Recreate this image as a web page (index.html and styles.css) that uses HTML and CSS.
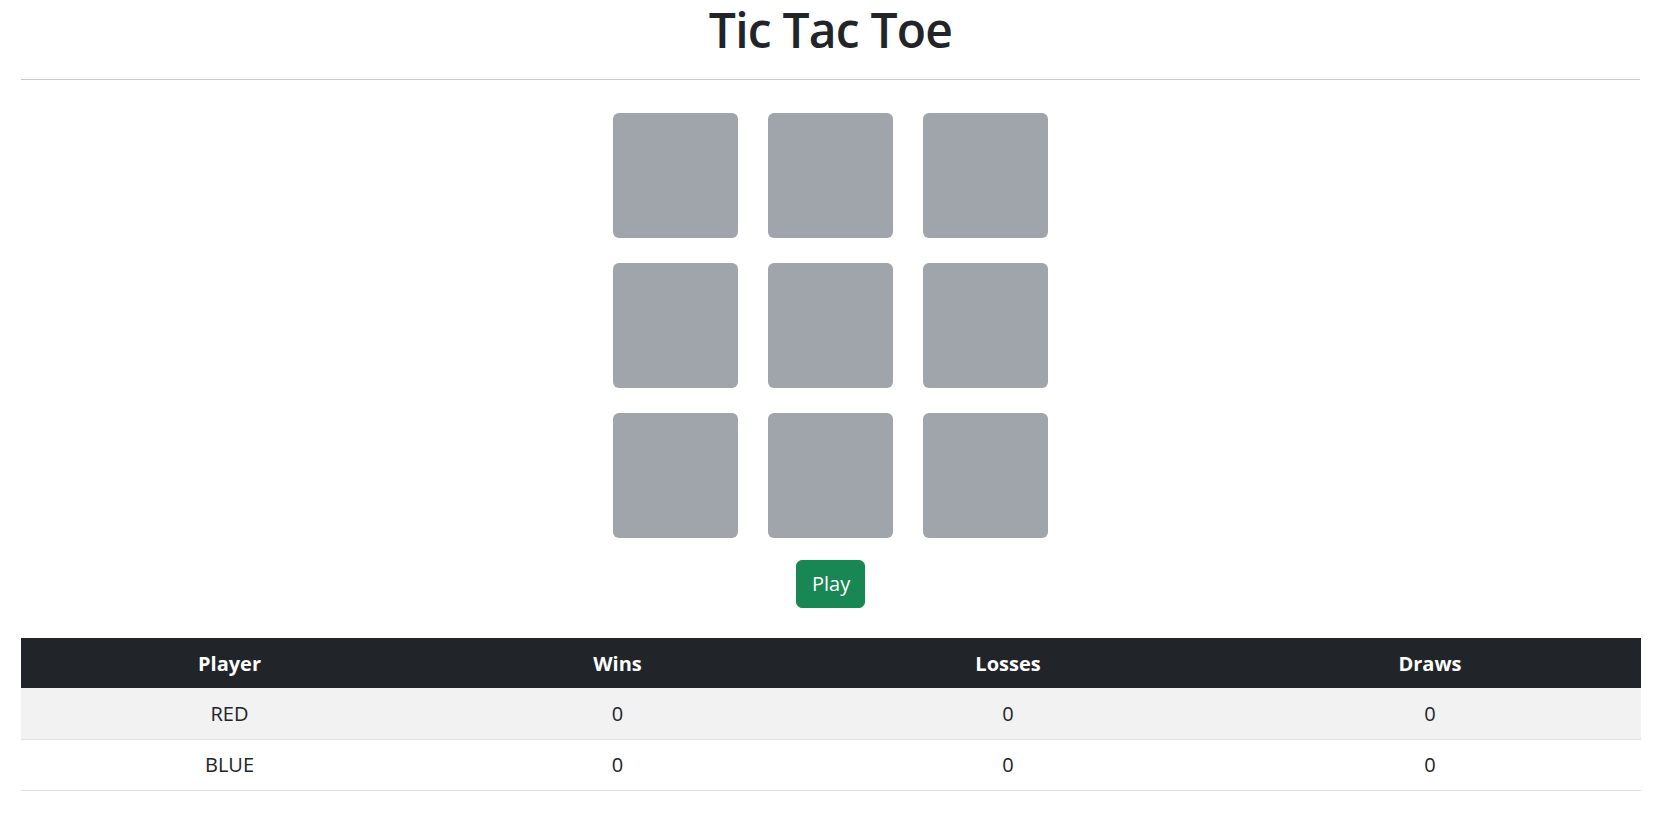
FILE: index.html
```html
<!DOCTYPE html>
<html lang="en">
<head>
<meta charset="utf-8">
<title>Tic Tac Toe</title>
<link rel="stylesheet" href="styles.css">
</head>
<body>
  <main class="page">
    <h1 class="title">Tic Tac Toe</h1>
    <hr class="divider">
    <div class="board">
      <div class="cell"></div>
      <div class="cell"></div>
      <div class="cell"></div>
      <div class="cell"></div>
      <div class="cell"></div>
      <div class="cell"></div>
      <div class="cell"></div>
      <div class="cell"></div>
      <div class="cell"></div>
    </div>
    <div class="actions">
      <button class="btn-play" type="button">Play</button>
    </div>
    <table class="scores">
      <colgroup>
        <col class="col-player">
        <col class="col-wins">
        <col class="col-losses">
        <col class="col-draws">
      </colgroup>
      <thead>
        <tr><th>Player</th><th>Wins</th><th>Losses</th><th>Draws</th></tr>
      </thead>
      <tbody>
        <tr class="striped"><td>RED</td><td>0</td><td>0</td><td>0</td></tr>
        <tr><td>BLUE</td><td>0</td><td>0</td><td>0</td></tr>
      </tbody>
    </table>
  </main>
</body>
</html>
```
FILE: styles.css
```css
html, body {
  margin: 0;
  padding: 0;
  background: #ffffff;
}

body {
  font-family: "Open Sans", "Noto Sans", "Liberation Sans", sans-serif;
  font-size: 20px;
  color: #212529;
}

.page {
  padding: 0 27px 0 21px;
}

.title {
  margin: 0;
  padding-top: 0;
  height: 79px;
  box-sizing: border-box;
  font-size: 48px;
  font-weight: 600;
  line-height: 60px;
  text-align: center;
  letter-spacing: -0.8px;
}

.divider {
  margin: 0;
  border: 0;
  height: 1px;
  background: #c9caca;
}

.board {
  display: grid;
  grid-template-columns: repeat(3, 125px);
  grid-auto-rows: 125px;
  column-gap: 30px;
  row-gap: 25px;
  justify-content: center;
  margin-top: 33px;
}

.cell {
  background: #a0a5ac;
  border-radius: 6px;
}

.actions {
  display: flex;
  justify-content: center;
  margin-top: 22px;
}

.btn-play {
  font-family: inherit;
  font-size: 20px;
  line-height: 30px;
  color: #ffffff;
  background: #198754;
  border: 1px solid #198754;
  border-radius: 6px;
  padding: 8px 15px;
  width: 69px;
  height: 48px;
  box-sizing: border-box;
  cursor: pointer;
}

.scores {
  width: 100%;
  margin-top: 30px;
  border-collapse: collapse;
  table-layout: fixed;
  text-align: center;
}

.col-player { width: 417px; }
.col-wins { width: 359px; }
.col-losses { width: 422px; }
.col-draws { width: 422px; }

.scores th {
  background: #212529;
  color: #ffffff;
  font-weight: 700;
  height: 50px;
  padding: 0 10px;
  box-sizing: border-box;
}

.scores td {
  height: 51px;
  padding: 0 10px;
  box-sizing: border-box;
  border-bottom: 1px solid #dee2e6;
}

.scores .striped td {
  background: #f2f2f2;
}
```
